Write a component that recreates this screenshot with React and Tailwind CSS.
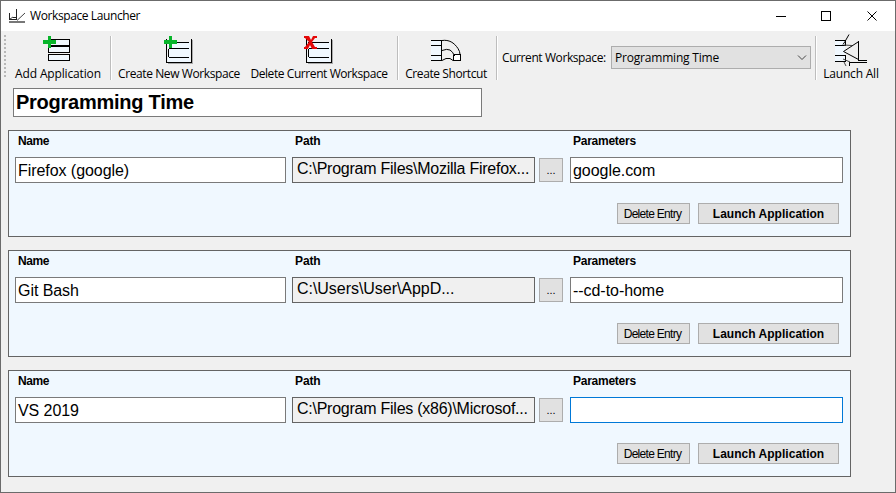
const entries = [
  { name: "Firefox (google)", path: "C:\\Program Files\\Mozilla Firefox...", params: "google.com" },
  { name: "Git Bash", path: "C:\\Users\\User\\AppD...", params: "--cd-to-home", loose: true },
  { name: "VS 2019", path: "C:\\Program Files (x86)\\Microsof...", params: "", focused: true },
];

function AppIcon() {
  return (
    <svg width="18" height="16" viewBox="0 0 18 16" fill="none">
      <path d="M1.500 5v6M1 11.500h8M8.500 1v11M4.500 9h4" stroke="#222" shapeRendering="crispEdges" />
      <path d="M9 12.500L17 5M2 11l3-2" stroke="#444" />
      <path d="M1 14h16" stroke="#777" strokeWidth="2" shapeRendering="crispEdges" />
    </svg>
  );
}

function Plus({ x }) {
  return <path d={`M${x} 5h5V1h3v4h5v4h-5v4h-3V9h-5z`} fill="#08b52a" />;
}

function AddIcon() {
  return (
    <svg width="32" height="32" viewBox="0 0 32 32" shapeRendering="crispEdges">
      <g fill="#f0f8ff" stroke="#000">
        <rect x="6.500" y="4.500" width="21" height="6" />
        <rect x="6.500" y="11.500" width="21" height="6" />
        <rect x="6.500" y="19.500" width="21" height="6" />
      </g>
      <Plus x={1} />
    </svg>
  );
}

function WorkspaceIcon({ remove }) {
  return (
    <svg width="32" height="32" viewBox="0 0 32 32" shapeRendering="crispEdges">
      <path d="M5 7h22v20H5z" fill="#f0f8ff" />
      <path d="M5 28.500h25M29.500 5v24" stroke="#aaa" />
      <path d="M3.500 4v24M5.500 14v8M3 27.500h26M28.500 4v24M5 7.500h21M6 13.500h20M6 22.500h20" stroke="#000" fill="none" />
      {remove ? (
        <path d="M1 1h5l2 4 2-4h4v2h-2l-3 4 3 5h2v2H9l-2-4-2 4H1v-2h1l4-5-4-4H1z" fill="#e50808" shapeRendering="auto" />
      ) : (
        <Plus x={1} />
      )}
    </svg>
  );
}

function ShortcutIcon() {
  return (
    <svg width="32" height="32" viewBox="0 0 32 32" fill="none" stroke="#000">
      <g shapeRendering="crispEdges">
        <path d="M1 5h10v21H1z" fill="#f0f8ff" stroke="none" />
        <path d="M1 5.500h11M1 10.500h11M1 20.500h11M1 25.500h11M11.500 5v21" />
        <path d="M24.500 19.500h6v6h-7v-4z" fill="#fff" />
      </g>
      <path d="M12 5.500c7-1 12 2 16 8q2 3 2 6M12 15.500q5-2 8-.5 3 2 4 5M12 25.500l4-2h4l3 2" />
    </svg>
  );
}

function LaunchIcon() {
  return (
    <svg width="34" height="34" viewBox="0 0 34 34" fill="none" stroke="#000">
      <path d="M1 6h10v22H1z" fill="#f0f8ff" stroke="none" />
      <path d="M1 6.500h10.500v5H1M1 21.500h10.500v6H1M24.500 7v19.500H33M15.500 32v-3.500H33" shapeRendering="crispEdges" />
      <path d="M15 .5l-4 7-2 3M24 8L9.500 17.500l15 8" />
      <path d="M10 11l8 .5M9 25l7 3M10 28l2 4" stroke="#444" />
    </svg>
  );
}

function Tool({ icon, label, className }) {
  return (
    <div className={`flex shrink-0 flex-col items-center pt-[3px] whitespace-nowrap ${className}`}>
      <div className="flex h-[34px] items-center">{icon}</div>
      <span className="mt-[-2px] leading-4">{label}</span>
    </div>
  );
}

function Separator({ className }) {
  return <div className={`mt-[5px] h-[44px] w-[2px] shrink-0 border-l border-[#bdbdbd] bg-white ${className}`} />;
}

function Entry({ entry }) {
  return (
    <section className="h-[107px] w-[843px] border border-[#646464] bg-[#f0f8ff] pt-[3px] pl-[6px]">
      <div className="flex h-[23px] text-[12px] leading-[15px] font-bold">
        <span className="w-[277px] pl-[3px] tracking-[-0.4px]">Name</span>
        <span className="w-[278px] pl-[3px] tracking-[-0.1px]">Path</span>
        <span className="pl-[3px] tracking-[-0.25px]">Parameters</span>
      </div>
      <div className="flex text-[16px]">
        <div className="h-[26px] w-[271px] border border-[#7a7a7a] bg-white pl-[2px] leading-[26px] tracking-[-0.06px]">{entry.name}</div>
        <div className={`ml-[6px] h-[26px] w-[243px] border border-[#646464] bg-[#f0f0f0] pl-[4px] leading-[22px] whitespace-nowrap ${entry.loose ? "tracking-[-0.04px]" : "tracking-[-0.25px]"}`}>
          {entry.path}
        </div>
        <div className="mt-px ml-[4px] h-6 w-6 border border-[#adadad] bg-[#e1e1e1] text-center text-[11px] leading-[23px]">...</div>
        <div className={`ml-[7px] h-[26px] w-[273px] border bg-white pl-[2px] leading-[26px] tracking-[-0.05px] ${entry.focused ? "border-[#0078d7]" : "border-[#7a7a7a]"}`}>
          {entry.params}
        </div>
      </div>
      <div className="mt-[20px] ml-[602px] flex gap-2 text-center text-[12px] leading-[20px] whitespace-nowrap">
        <div className="h-[21px] w-[73px] border border-[#adadad] bg-[#e1e1e1] pr-[2px] tracking-[-0.7px]">Delete Entry</div>
        <div className="h-[21px] w-[141px] border border-[#adadad] bg-[#e1e1e1] font-bold tracking-[0.03px]">Launch Application</div>
      </div>
    </section>
  );
}

export default function App() {
  return (
    <div className="h-[493px] w-[896px] overflow-hidden border border-[#6b6b6b] bg-[#f0f0f0] font-['Liberation_Sans',Arial,sans-serif] text-black">
      <header className="flex h-[30px] items-center bg-white font-['Open_Sans','Noto_Sans',sans-serif] text-[12px]">
        <div className="ml-[7px] w-[22px]"><AppIcon /></div>
        <span className="whitespace-nowrap tracking-[-0.4px]">Workspace Launcher</span>
        <svg className="mr-[12px] ml-auto" width="110" height="12" viewBox="0 0 110 12" fill="none" stroke="#000">
          <path d="M3 6.500h10M48.500 1.500h9v9h-9z" shapeRendering="crispEdges" />
          <path d="M94.500 1.500l9 9M103.500 1.500l-9 9" />
        </svg>
      </header>
      <nav className="flex h-[53px] font-['Open_Sans','Noto_Sans',sans-serif] text-[12px]">
        <div className="mt-[4px] ml-[3px] h-[44px] w-[2px] shrink-0 bg-[repeating-linear-gradient(to_bottom,#b8b8b8_0_2px,transparent_2px_4px)]" />
        <Tool icon={<AddIcon />} label="Add Application" className="ml-[9px] w-[86px] tracking-[-0.15px]" />
        <Separator className="ml-[9px]" />
        <Tool icon={<WorkspaceIcon />} label="Create New Workspace" className="ml-[6px] w-[122px] tracking-[-0.4px]" />
        <Tool icon={<WorkspaceIcon remove />} label="Delete Current Workspace" className="mr-px ml-[11px] w-[136px] tracking-[-0.42px]" />
        <Separator className="ml-[9px]" />
        <Tool icon={<ShortcutIcon />} label="Create Shortcut" className="ml-[6px] w-[82px] tracking-[-0.4px]" />
        <Separator className="ml-[9px]" />
        <span className="ml-[4px] w-[109px] shrink-0 pt-[19px] leading-4 tracking-[-0.41px] whitespace-nowrap">Current Workspace:</span>
        <div className="mt-[15px] flex h-[23px] w-[200px] shrink-0 items-center justify-between border border-[#adadad] bg-[#e1e1e1] pr-[3px] pl-[3px]">
          <span className="tracking-[-0.2px]">Programming Time</span>
          <svg width="10" height="6" viewBox="0 0 10 6" fill="none" stroke="#444"><path d="M1 .5l4 4 4-4" /></svg>
        </div>
        <Separator className="ml-[4px]" />
        <Tool icon={<LaunchIcon />} label="Launch All" className="ml-[6px] w-[56px] tracking-[-0.2px]" />
      </nav>
      <main className="pt-[4px] pl-[7px]">
        <div className="ml-[5px] h-[29px] w-[469px] border border-[#7a7a7a] bg-white pl-[2px] text-[20px] leading-[27px] font-bold tracking-[-0.25px]">Programming Time</div>
        <div className="mt-[13px] flex flex-col gap-[13px]">
          {entries.map((entry) => <Entry key={entry.name} entry={entry} />)}
        </div>
      </main>
    </div>
  );
}
